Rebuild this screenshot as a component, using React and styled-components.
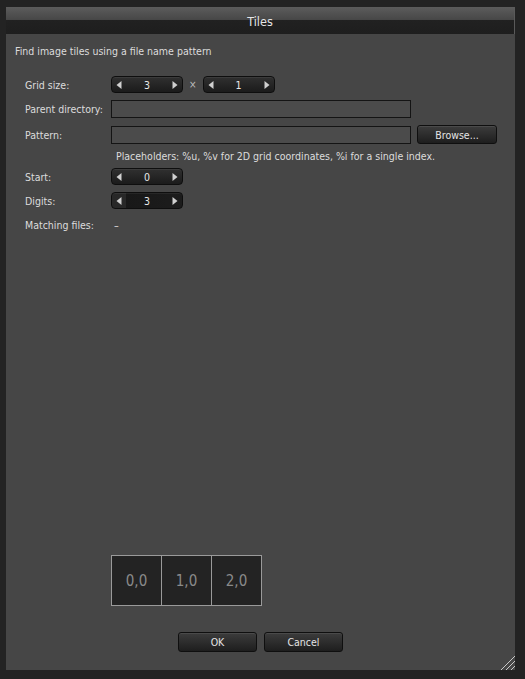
import React from "react";
import styled, { createGlobalStyle } from "styled-components";

const GlobalStyle = createGlobalStyle`
  html, body {
    margin: 0;
    padding: 0;
    background: #232323;
  }
  body {
    font-family: "DejaVu Sans Condensed", "DejaVu Sans", "Liberation Sans", sans-serif;
    font-size: 10.5px;
    color: #dcdcdc;
  }
`;

const Screen = styled.div`
  width: 525px;
  height: 679px;
  padding: 7px 0 0 6px;
  box-sizing: border-box;
`;

const Dialog = styled.div`
  width: 509px;
  height: 663px;
  background: #464646;
  display: flex;
  flex-direction: column;
  position: relative;
`;

const TitleBar = styled.div`
  height: 27px;
  padding-top: 2px;
  box-sizing: border-box;
  display: flex;
  align-items: center;
  justify-content: center;
  background: linear-gradient(
    to bottom,
    #5c5c5c 0,
    #474747 47%,
    #212121 48%,
    #1e1e1e 100%
  );
  border-right: 1px solid #5a5a5a;
  font-size: 12.5px;
  color: #e6e6e6;
`;

const Body = styled.div`
  flex: 1;
  display: flex;
  flex-direction: column;
  padding: 10px 9px 18px 9px;
`;

const Intro = styled.div`
  line-height: 14px;
  margin-bottom: 18px;
`;

const Form = styled.div`
  display: grid;
  grid-template-columns: 86px 1fr;
  align-items: center;
  row-gap: 7px;
  padding-left: 10px;
`;

const Label = styled.div`
  line-height: 14px;
  margin-top: ${(p) => p.$top || 0}px;
`;

const Row = styled.div`
  display: flex;
  align-items: center;
  gap: 6px;
`;

const Times = styled.span`
  color: #bbb;
  font-size: 10px;
`;

const Spin = styled.div`
  width: 72px;
  height: 17px;
  box-sizing: border-box;
  border: 1px solid #0e0e0e;
  border-radius: 4px;
  background: ${(p) =>
    p.$pressed
      ? "linear-gradient(to right, #282828 0, #282828 14px, #181818 14px, #1c1c1c 100%)"
      : "linear-gradient(to bottom, #303030, #1b1b1b)"};
  box-shadow: inset 0 1px 0 rgba(255, 255, 255, 0.06);
  display: flex;
  align-items: center;
  justify-content: space-between;
  padding: 0 4px;
  color: #e8e8e8;
`;

const Arrow = styled.svg`
  width: 6px;
  height: 8px;
  display: block;
`;

const Field = styled.div`
  width: 300px;
  height: 18px;
  box-sizing: border-box;
  border: 1px solid #141414;
  background: #4b4b4b;
`;

const Button = styled.div`
  width: ${(p) => p.$w || 80}px;
  height: ${(p) => p.$h || 20}px;
  box-sizing: border-box;
  border: 1px solid #0f0f0f;
  border-radius: 3px;
  background: linear-gradient(to bottom, #3c3c3c, #1e1e1e);
  box-shadow: inset 0 1px 0 rgba(255, 255, 255, 0.08);
  display: flex;
  align-items: center;
  justify-content: center;
  color: #e4e4e4;
`;

const Hint = styled.div`
  padding-left: 101px;
  margin: 5px 0 5px 0;
  line-height: 14px;
`;

const Spacer = styled.div`
  flex: 1;
`;

const TileGrid = styled.div`
  display: flex;
  margin-left: 96px;
  align-self: flex-start;
  border: 1px solid #9a9a9a;
`;

const Tile = styled.div`
  width: 49px;
  height: 49px;
  background: #232323;
  border-left: ${(p) => (p.$first ? "none" : "1px solid #9a9a9a")};
  display: flex;
  align-items: center;
  justify-content: center;
  font-size: 15px;
  color: #8a8a8a;
`;

const Buttons = styled.div`
  display: flex;
  justify-content: center;
  gap: 7px;
  margin-top: 26px;
`;

const Grip = styled.svg`
  position: absolute;
  right: 0;
  bottom: 0;
  width: 18px;
  height: 18px;
`;

const LeftArrow = () => (
  <Arrow viewBox="0 0 6 8">
    <polygon points="5.5,0 5.5,8 0.5,4" fill="#d0d0d0" />
  </Arrow>
);

const RightArrow = () => (
  <Arrow viewBox="0 0 6 8">
    <polygon points="0.5,0 0.5,8 5.5,4" fill="#d0d0d0" />
  </Arrow>
);

const SpinBox = ({ value, pressed }) => (
  <Spin $pressed={pressed}>
    <LeftArrow />
    <span>{value}</span>
    <RightArrow />
  </Spin>
);

const App = () => {
  return (
    <>
      <GlobalStyle />
      <Screen>
        <Dialog>
          <TitleBar>Tiles</TitleBar>
          <Body>
            <Intro>Find image tiles using a file name pattern</Intro>
            <Form>
              <Label>Grid size:</Label>
              <Row>
                <SpinBox value="3" />
                <Times>×</Times>
                <SpinBox value="1" />
              </Row>
              <Label>Parent directory:</Label>
              <Field />
              <Label>Pattern:</Label>
              <Row>
                <Field />
                <Button $w={80} $h={19}>
                  Browse...
                </Button>
              </Row>
            </Form>
            <Hint>
              Placeholders: %u, %v for 2D grid coordinates, %i for a single
              index.
            </Hint>
            <Form>
              <Label>Start:</Label>
              <SpinBox value="0" />
              <Label>Digits:</Label>
              <SpinBox value="3" pressed />
              <Label $top={2}>Matching files:</Label>
              <Label $top={2}>&nbsp;–</Label>
            </Form>
            <Spacer />
            <TileGrid>
              <Tile $first>0,0</Tile>
              <Tile>1,0</Tile>
              <Tile>2,0</Tile>
            </TileGrid>
            <Buttons>
              <Button $w={79}>OK</Button>
              <Button $w={79}>Cancel</Button>
            </Buttons>
          </Body>
          <Grip viewBox="0 0 18 18">
            <line x1="18" y1="4" x2="4" y2="18" stroke="#c8c8c8" strokeWidth="1" />
            <line x1="18" y1="9" x2="9" y2="18" stroke="#c8c8c8" strokeWidth="1" />
            <line x1="18" y1="14" x2="14" y2="18" stroke="#c8c8c8" strokeWidth="1" />
          </Grip>
        </Dialog>
      </Screen>
    </>
  );
};

export default App;
